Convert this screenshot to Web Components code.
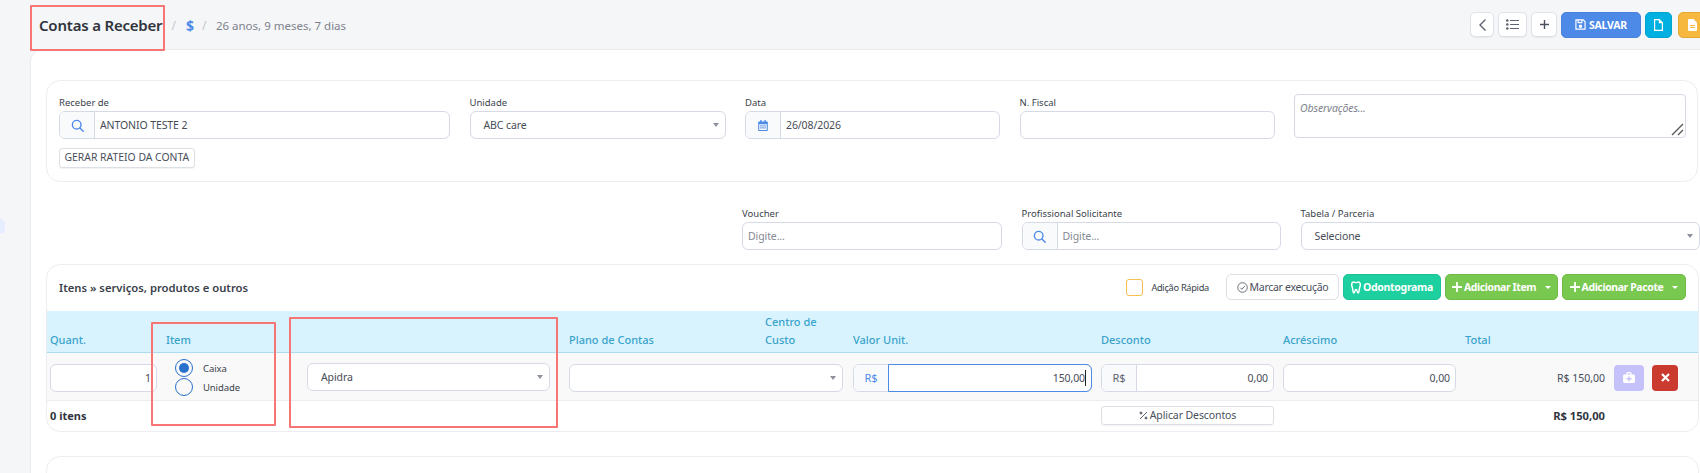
<!DOCTYPE html>
<html lang="pt-BR">
<head>
<meta charset="utf-8">
<title>Contas a Receber</title>
<style>
    html, body { margin: 0; height: 473px; overflow: hidden; }
    body { background: #f5f6f8; font-family: "Noto Sans", "Open Sans", sans-serif; color: #4a4f5c; }
</style>
</head>
<body>
<app-shell>
    <page-header></page-header>
    <form-card></form-card>
    <extra-fields></extra-fields>
    <items-card></items-card>
    <empty-card></empty-card>
</app-shell>
<red-mark style="--x:30px;--y:5px;--w:135px;--h:46px"></red-mark>
<red-mark style="--x:151px;--y:322px;--w:125px;--h:104px"></red-mark>
<red-mark style="--x:289px;--y:317px;--w:269px;--h:111px"></red-mark>

<script>
const FONT = `font-family: "Noto Sans", "Open Sans", sans-serif;`;

const ICONS = {
    search: `<svg width="13" height="13" viewBox="0 0 16 16" fill="none" stroke="#4d8ae8" stroke-width="1.7" stroke-linecap="round"><circle cx="7" cy="7" r="5.3"/><path d="M11 11l4 4"/></svg>`,
    calendar: `<svg width="10" height="11" viewBox="0 0 14 16" fill="#4d8ae8"><path d="M3 0h2v2h4V0h2v2h2a1 1 0 0 1 1 1v12a1 1 0 0 1-1 1H1a1 1 0 0 1-1-1V3a1 1 0 0 1 1-1h2zM1.5 6v8.5h11V6z"/><path d="M3 7.5h2v2H3zM6 7.5h2v2H6zM9 7.5h2v2H9zM3 10.5h2v2H3zM6 10.5h2v2H6zM9 10.5h2v2H9z"/></svg>`,
    chevron: `<svg width="9" height="14" viewBox="0 0 9 14" fill="none" stroke="#5c6470" stroke-width="1.4"><path d="M7.5 1.5L2 7l5.5 5.5"/></svg>`,
    list: `<svg width="13" height="11" viewBox="0 0 13 11" fill="#5c6470"><circle cx="1.3" cy="1.5" r="1.3"/><circle cx="1.3" cy="5.5" r="1.3"/><circle cx="1.3" cy="9.5" r="1.3"/><path d="M4 1h9v1H4zM4 5h9v1H4zM4 9h9v1H4z"/></svg>`,
    plus: `<svg width="9" height="9" viewBox="0 0 9 9" fill="#4a4f5c"><path d="M3.8 0h1.4v3.8H9v1.4H5.2V9H3.8V5.2H0V3.8h3.8z"/></svg>`,
    plusWhite: `<svg width="10" height="10" viewBox="0 0 9 9" fill="#fff"><path d="M3.7 0h1.6v3.7H9v1.6H5.3V9H3.7V5.3H0V3.7h3.7z"/></svg>`,
    save: `<svg width="11" height="11" viewBox="0 0 12 12" fill="none" stroke="#fff" stroke-width="1.3"><path d="M1 1h8l2 2v8H1z"/><path d="M3.5 1v3h4V1" /><circle cx="6" cy="8" r="1.3" fill="#fff"/></svg>`,
    doc: `<svg width="9" height="12" viewBox="0 0 9 12" fill="#fff"><path d="M0 0h5.5L9 3.5V12H0zM1.2 1.2v9.6h6.6V4.2H4.8v-3z" fill-rule="evenodd"/></svg>`,
    docFill: `<svg width="9" height="12" viewBox="0 0 9 12"><path d="M1 0h4.5L9 3.5V11a1 1 0 0 1-1 1H1a1 1 0 0 1-1-1V1a1 1 0 0 1 1-1z" fill="#fff"/><path d="M2 6h5v1H2zM2 8h5v1H2z" fill="#f6b83f"/></svg>`,
    check: `<svg width="11" height="11" viewBox="0 0 12 12" fill="none" stroke="#5c6470" stroke-width="1"><circle cx="6" cy="6" r="5.2"/><path d="M3.5 6.2l1.8 1.8 3.2-3.6"/></svg>`,
    tooth: `<svg width="10" height="13" viewBox="0 0 12 15" fill="none" stroke="#fff" stroke-width="1.8" stroke-linejoin="round"><path d="M3.2 1C1.6 1 .8 2.5.8 4.2c0 2 1 3 1.2 5 .2 1.800.5 4.800 1.500 4.800 1.300 0 .9-4 2.500-4s1.200 4 2.500 4c1 0 1.300-3 1.500-4.800.2-2 1.200-3 1.200-5C11.200 2.500 10.400 1 8.800 1 7.500 1 7 1.800 6 1.800S4.500 1 3.200 1z"/></svg>`,
    percent: `<svg width="9" height="9" viewBox="0 0 9 9" fill="none" stroke="#5c6470" stroke-width="1"><path d="M1 8l7-7"/><circle cx="2" cy="2" r="1" fill="#5c6470"/><circle cx="7" cy="7" r="1" fill="#5c6470"/></svg>`,
    medkit: `<svg width="12" height="11" viewBox="0 0 14 13"><path d="M4 3V1.500A1.500 1.500 0 0 1 5.500 0h3A1.500 1.500 0 0 1 10 1.500V3h2.500A1.500 1.500 0 0 1 14 4.500v7a1.500 1.500 0 0 1-1.500 1.500h-11A1.500 1.500 0 0 1 0 11.500v-7A1.500 1.500 0 0 1 1.500 3zM5.500 3h3V1.500h-3z" fill="#fff" fill-rule="evenodd"/><path d="M6.200 5h1.600v2.200H10v1.600H7.800V11H6.200V8.800H4V7.200h2.200z" fill="#c5c1fa"/></svg>`,
    close: `<svg width="9" height="9" viewBox="0 0 9 9" stroke="#fff" stroke-width="2.200"><path d="M1 1l7 7M8 1L1 8"/></svg>`
};

class AppShell extends HTMLElement {
    constructor() {
        super();
        this.attachShadow({ mode: 'open' });
        this.shadowRoot.innerHTML = `
            <style>
                :host { display: grid; grid-template-columns: 30px 1fr; height: 473px; overflow: hidden; ${FONT} }
                .rail { padding-top: 219px; }
                .pill { width: 5px; height: 15px; background: #e6edff; border-radius: 0 6px 6px 0; }
                main { display: flex; flex-direction: column; min-width: 0; }
            </style>
            <div class="rail"><div class="pill"></div></div>
            <main><slot></slot></main>
        `;
    }
}

class PageHeader extends HTMLElement {
    constructor() {
        super();
        this.attachShadow({ mode: 'open' });
        this.shadowRoot.innerHTML = `
            <style>
                :host { display: flex; align-items: center; justify-content: space-between; height: 49px; padding-left: 9px; border-bottom: 1px solid #e8eaee; flex: none; }
                .crumbs { display: flex; align-items: center; margin-top: 1px; }
                h1 { margin: 0; font-size: 15px; font-weight: 600; letter-spacing: -.2px; color: #30343d; white-space: nowrap; }
                .sep { color: #c4c7cd; font-size: 12px; margin: 0 7px 0 9px; }
                .dollar { color: #4d8ae8; font-size: 14px; font-weight: 700; margin-left: 3px; margin-right: -1px; }
                .age { color: #7d828c; font-size: 11.500px; margin-left: 2.500px; }
                .tools { display: flex; margin-top: 0; align-items: center; }
                .tool { box-sizing: border-box; height: 25px; border: 1px solid #dfe2e6; border-radius: 5px; background: #fff; display: flex; align-items: center; justify-content: center; box-shadow: 0 1px 1px rgba(0,0,0,.06); }
                .save { box-sizing: border-box; width: 80px; height: 26px; border-radius: 5px; background: #4d8ae8; border: 1px solid #4a82dc; color: #fff; font-size: 10.500px; letter-spacing: -.2px; font-weight: 700; display: flex; align-items: center; justify-content: center; gap: 3px; margin-left: 4px; }
                .color { box-sizing: border-box; height: 26px; border-radius: 5px; display: flex; align-items: center; justify-content: center; }
            </style>
            <div class="crumbs">
                <h1>Contas a Receber</h1>
                <span class="sep">/</span><span class="dollar">$</span><span class="sep">/</span>
                <span class="age">26 anos, 9 meses, 7 dias</span>
            </div>
            <div class="tools">
                <div class="tool" style="width:24px">${ICONS.chevron}</div>
                <div class="tool" style="width:29px;margin-left:4px">${ICONS.list}</div>
                <div class="tool" style="width:26px;margin-left:4px">${ICONS.plus}</div>
                <div class="save">${ICONS.save}SALVAR</div>
                <div class="color" style="width:27px;margin-left:4px;background:#00b0e0;border:1px solid #02a3cf">${ICONS.doc}</div>
                <div class="color" style="width:27px;margin-left:6px;margin-right:-5px;background:#f6b83f;border:1px solid #e5a832;justify-content:flex-start;padding-left:9px">${ICONS.docFill}</div>
            </div>
        `;
    }
}

// label + control, used by all the form fields
class UiField extends HTMLElement {
    constructor() {
        super();
        this.attachShadow({ mode: 'open' });
    }
    connectedCallback() {
        this.shadowRoot.innerHTML = `
            <style>
                :host { display: flex; flex-direction: column; min-width: 0; }
                label { font-size: 9.500px; line-height: 13px; height: 15px; padding-top: 2px; color: #3a3f4a; white-space: nowrap; }
            </style>
            <label>${this.getAttribute('label') || ''}</label>
            <slot></slot>
        `;
    }
}

// bordered box with optional addon, select arrow or placeholder
class UiInput extends HTMLElement {
    constructor() {
        super();
        this.attachShadow({ mode: 'open' });
    }
    connectedCallback() {
        const addon = this.getAttribute('addon');
        const addonText = this.getAttribute('addon-text');
        const align = this.getAttribute('align') || 'left';
        const isSelect = this.hasAttribute('select');
        const placeholder = this.getAttribute('placeholder');
        const focus = this.hasAttribute('focus');
        const value = this.getAttribute('value') || '';
        const addonColor = this.getAttribute('addon-color') || '#5c6470';
        this.shadowRoot.innerHTML = `
            <style>
                :host { display: flex; box-sizing: border-box; height: 28px; border: 1px solid #d6dae6; border-radius: 6px; background: #fff; font-size: 10.500px; letter-spacing: -.1px; color: #474c58; }
                .addon { width: 35px; flex: none; display: flex; align-items: center; justify-content: center; background: #f9fafb; border-right: 1px solid #d6dae6; border-radius: 5px 0 0 5px; box-sizing: border-box; font-size: 11px; color: ${addonColor}; }
                .body { flex: 1; min-width: 0; display: flex; align-items: center; padding: 0 5px; justify-content: ${align === 'right' ? 'flex-end' : 'flex-start'}; }
                .body.select { padding-left: 13px; justify-content: space-between; padding-right: 6px; }
                .body.focus { border: 1px solid #4d8ae8; border-radius: 0 6px 6px 0; margin: -1px -1px -1px -1px; }
                .ph { color: #848994; }
                .arrow { width: 0; height: 0; border: 3.500px solid transparent; border-top: 4px solid #8d9199; border-bottom: 0; }
                .caret { width: 1px; height: 16px; background: #222; margin-left: 0; }
            </style>
            ${addon ? `<div class="addon">${ICONS[addon]}</div>` : ''}
            ${addonText ? `<div class="addon">${addonText}</div>` : ''}
            <div class="body ${isSelect ? 'select' : ''} ${focus ? 'focus' : ''}">
                ${placeholder ? `<span class="ph">${placeholder}</span>` : `<span>${value}</span>`}
                ${focus ? '<span class="caret"></span>' : ''}
                ${isSelect ? '<span class="arrow"></span>' : ''}
            </div>
        `;
    }
}

class UiBtn extends HTMLElement {
    constructor() {
        super();
        this.attachShadow({ mode: 'open' });
    }
    connectedCallback() {
        const icon = this.getAttribute('icon');
        const kind = this.getAttribute('kind') || 'light';
        const colors = {
            light: 'background:#fff;color:#4a4f5c;border:1px solid #dcdfe4;font-weight:400;letter-spacing:-.3px',
            teal: 'background:#1ed0a0;color:#fff;border:1px solid #1cc297;font-weight:700;letter-spacing:-.3px',
            green: 'background:#79c850;color:#fff;border:1px solid #6fb948;font-weight:700;letter-spacing:-.4px'
        };
        this.shadowRoot.innerHTML = `
            <style>
                :host { display: block; flex: none; }
                div { box-sizing: border-box; height: 26px; border-radius: 5px; display: flex; align-items: center; justify-content: center; gap: 2px; font-size: 10.500px; white-space: nowrap; ${colors[kind]} }
                .arrow { width: 0; height: 0; border: 3px solid transparent; border-top: 3px solid #fff; border-bottom: 0; margin-left: 7px; }
            </style>
            <div>${icon ? ICONS[icon] : ''}<slot></slot>${this.hasAttribute('caret') ? '<span class="arrow"></span>' : ''}</div>
        `;
    }
}

class FormCard extends HTMLElement {
    constructor() {
        super();
        this.attachShadow({ mode: 'open' });
        this.shadowRoot.innerHTML = `
            <style>
                :host { display: block; background: #fff; border-left: 1px solid #e8eaee; border-radius: 12px 0 0 0; padding: 30px 2px 0 15px; flex: none; }
                .card { box-sizing: border-box; height: 102px; border: 1px solid #ebedf0; border-radius: 14px; padding: 13px 11px 0 12px; }
                .grid { display: grid; grid-template-columns: 391px 256px 255px 255px 392px; column-gap: 19.500px; align-items: start; }
                .rateio { display: inline-block; margin-top: 9px; box-sizing: border-box; height: 20px; line-height: 17px; padding: 0 4.500px; border: 1px solid #dcdfe4; border-radius: 3px; font-size: 10.400px; color: #4a4f5c; box-shadow: 0 1px 1px rgba(0,0,0,.05); white-space: nowrap; }
                .obs { box-sizing: border-box; height: 44px; border: 1px solid #d6dae6; border-radius: 4px; padding: 6px 5px; font-size: 10.500px; letter-spacing: -.1px; font-style: italic; color: #7d828c; position: relative; }
                .obs svg { position: absolute; right: 1px; bottom: 1px; }
            </style>
            <div class="card">
                <div class="grid">
                    <div>
                        <ui-field label="Receber de"><ui-input addon="search" value="ANTONIO TESTE 2"></ui-input></ui-field>
                        <div class="rateio">GERAR RATEIO DA CONTA</div>
                    </div>
                    <ui-field label="Unidade"><ui-input select value="ABC care"></ui-input></ui-field>
                    <ui-field label="Data"><ui-input addon="calendar" value="26/08/2026"></ui-input></ui-field>
                    <ui-field label="N. Fiscal"><ui-input></ui-input></ui-field>
                    <div class="obs">Observações...
                        <svg width="13" height="13" viewBox="0 0 13 13" stroke="#555" stroke-width="1.300" fill="none"><path d="M1 12L12 1M7 12l5-5"/></svg>
                    </div>
                </div>
            </div>
        `;
    }
}

class ExtraFields extends HTMLElement {
    constructor() {
        super();
        this.attachShadow({ mode: 'open' });
        this.shadowRoot.innerHTML = `
            <style>
                :host { display: block; background: #fff; border-left: 1px solid #e8eaee; padding: 23px 0 0 711px; height: 59px; flex: none; }
                .grid { display: grid; grid-template-columns: 260px 259.500px 399px; column-gap: 19.500px; }
            </style>
            <div class="grid">
                <ui-field label="Voucher"><ui-input placeholder="Digite..."></ui-input></ui-field>
                <ui-field label="Profissional Solicitante"><ui-input addon="search" placeholder="Digite..."></ui-input></ui-field>
                <ui-field label="Tabela / Parceria"><ui-input select value="Selecione"></ui-input></ui-field>
            </div>
        `;
    }
}

class ItemsCard extends HTMLElement {
    constructor() {
        super();
        this.attachShadow({ mode: 'open' });
        this.shadowRoot.innerHTML = `
            <style>
                :host { display: block; background: #fff; border-left: 1px solid #e8eaee; padding: 0 1px 0 15px; flex: none; }
                .card { box-sizing: border-box; height: 168px; border: 1px solid #ebedf0; border-radius: 14px; overflow: hidden; display: flex; flex-direction: column; }
                .top { height: 46px; flex: none; display: flex; align-items: center; padding: 0 12px 2px 12px; box-sizing: border-box; }
                h3 { margin: 0; font-size: 11.250px; font-weight: 600; color: #3a3f4a; flex: 1; }
                .quick { display: flex; align-items: center; gap: 8px; font-size: 9.250px; letter-spacing: -.3px; color: #3a3f4a; margin-right: 17px; }
                .check { box-sizing: border-box; width: 17px; height: 17px; border: 1px solid #f6c050; border-radius: 3px; }
                .actions { display: flex; gap: 4px; }
                .row { display: grid; grid-template-columns: 107px 132px 253px 187px 79px 239px 173px 173px 140px 1fr; column-gap: 9px; padding-left: 3px; box-sizing: border-box; }
                .head { height: 42px; background: #d9f3fe; border-bottom: 1px solid #abdcf0; align-items: end; padding-bottom: 4px; font-size: 11px; font-weight: 500; color: #39a3cb; line-height: 17.500px; flex: none; }
                .line { height: 48px; padding-top: 2px; background: #f9f9f9; border-bottom: 1px solid #ebedf0; align-items: center; flex: none; }
                .foot { flex: 1; padding-bottom: 2px; align-items: center; font-size: 11px; font-weight: 700; color: #30343d; }
                .radios { display: flex; flex-direction: column; padding-left: 9px; }
                .radio { display: flex; align-items: center; gap: 10px; font-size: 9.500px; letter-spacing: -.1px; color: #3a3f4a; height: 19px; }
                .dot { box-sizing: border-box; width: 18px; height: 18px; border: 1px solid #2a71cd; border-radius: 50%; display: flex; align-items: center; justify-content: center; flex: none; }
                .dot.on::after { content: ""; width: 10px; height: 10px; border-radius: 50%; background: #2a71cd; }
                .total { text-align: right; font-size: 10.500px; color: #474c58; }
                .btns { display: flex; gap: 8px; }
                .sq { box-sizing: border-box; height: 26px; border-radius: 4px; display: flex; align-items: center; justify-content: center; }
                .apply { box-sizing: border-box; height: 19px; border: 1px solid #dcdfe4; border-radius: 3px; display: flex; align-items: center; justify-content: center; gap: 2px; font-size: 10.500px; letter-spacing: -.1px; font-weight: 400; color: #4a4f5c; box-shadow: 0 1px 1px rgba(0,0,0,.05); }
                .span2 { grid-column: span 2; width: 274px; }
                .apidra { width: 243px; margin-bottom: 2px; }
            </style>
            <div class="card">
                <div class="top">
                    <h3>Itens » serviços, produtos e outros</h3>
                    <div class="quick"><span class="check"></span>Adição Rápida</div>
                    <div class="actions">
                        <ui-btn icon="check" style="width:113px">Marcar execução</ui-btn>
                        <ui-btn kind="teal" icon="tooth" style="width:98px">Odontograma</ui-btn>
                        <ui-btn kind="green" icon="plusWhite" caret style="width:113px">Adicionar Item</ui-btn>
                        <ui-btn kind="green" icon="plusWhite" caret style="width:124px">Adicionar Pacote</ui-btn>
                    </div>
                </div>
                <div class="row head">
                    <span>Quant.</span><span>Item</span><span></span><span>Plano de Contas</span><span>Centro de Custo</span>
                    <span>Valor Unit.</span><span>Desconto</span><span>Acréscimo</span><span>Total</span><span></span>
                </div>
                <div class="row line">
                    <ui-input align="right" value="1"></ui-input>
                    <div class="radios">
                        <div class="radio"><span class="dot on"></span>Caixa</div>
                        <div class="radio"><span class="dot"></span>Unidade</div>
                    </div>
                    <ui-input class="apidra" select value="Apidra"></ui-input>
                    <ui-input class="span2" select></ui-input>
                    <ui-input addon-text="R$" addon-color="#4d8ae8" align="right" focus value="150,00"></ui-input>
                    <ui-input addon-text="R$" align="right" value="0,00"></ui-input>
                    <ui-input align="right" value="0,00"></ui-input>
                    <div class="total">R$ 150,00</div>
                    <div class="btns">
                        <div class="sq" style="width:30px;background:#c5c1fa">${ICONS.medkit}</div>
                        <div class="sq" style="width:26px;background:#cb3a2e">${ICONS.close}</div>
                    </div>
                </div>
                <div class="row foot">
                    <span>0 itens</span><span></span><span></span><span></span><span></span><span></span>
                    <div class="apply">${ICONS.percent}Aplicar Descontos</div>
                    <span></span><div class="total" style="font-weight:700;font-size:11.200px;color:#30343d">R$ 150,00</div><span></span>
                </div>
            </div>
        `;
    }
}

class EmptyCard extends HTMLElement {
    constructor() {
        super();
        this.attachShadow({ mode: 'open' });
        this.shadowRoot.innerHTML = `
            <style>
                :host { display: block; flex: 1; background: #fff; border-left: 1px solid #e8eaee; padding: 24px 1px 0 15px; }
                div { box-sizing: border-box; height: 60px; border: 1px solid #ebedf0; border-radius: 14px; }
            </style>
            <div></div>
        `;
    }
}

// red rectangles drawn by hand over the screenshot
class RedMark extends HTMLElement {
    constructor() {
        super();
        this.attachShadow({ mode: 'open' });
        this.shadowRoot.innerHTML = `
            <style>
                :host { position: absolute; left: var(--x); top: var(--y); width: var(--w); height: var(--h); box-sizing: border-box; border: 2px solid #f87575; border-radius: 1px; pointer-events: none; }
            </style>
        `;
    }
}

customElements.define('app-shell', AppShell);
customElements.define('page-header', PageHeader);
customElements.define('ui-field', UiField);
customElements.define('ui-input', UiInput);
customElements.define('ui-btn', UiBtn);
customElements.define('form-card', FormCard);
customElements.define('extra-fields', ExtraFields);
customElements.define('items-card', ItemsCard);
customElements.define('empty-card', EmptyCard);
customElements.define('red-mark', RedMark);
</script>
</body>
</html>
